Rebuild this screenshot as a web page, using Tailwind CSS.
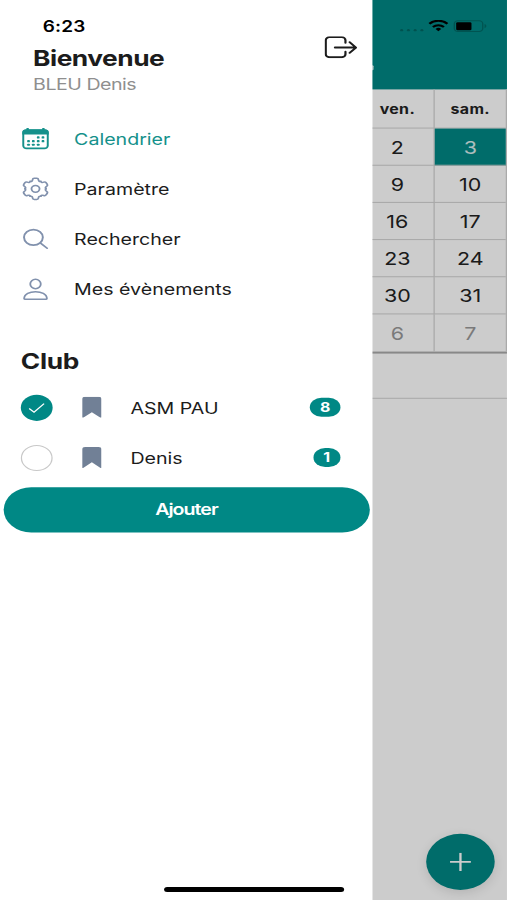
<!DOCTYPE html>
<html lang="fr">
<head>
    <meta charset="UTF-8" />
    <meta name="viewport" content="width=device-width, initial-scale=1.0" />
    <title>Calendrier - Menu</title>
    <script src="https://cdn.jsdelivr.net/npm/@tailwindcss/browser@4"></script>
</head>
<body class="w-[507px] h-[900px] overflow-hidden bg-white">
    <!-- 414x896 phone screen stretched to the window -->
    <div class="relative flex w-[414px] h-[896px] origin-top-left scale-x-[1.2246] scale-y-[1.0045] overflow-hidden font-[Inter,sans-serif] text-base text-[#1c1c1c]">

        <!-- Side menu -->
        <aside class="w-[304px] shrink-0 bg-white">
            <div class="h-[39px] pt-[15px] pl-[35px] text-[15.5px] leading-6 font-semibold tracking-[0.1px] text-black">6:23</div>

            <header class="flex justify-between h-[73.5px] pl-[27px] pr-[12px]">
                <div class="pt-[5px]">
                    <h1 class="text-[21.5px] leading-7 font-bold tracking-[-0.4px]">Bienvenue</h1>
                    <p class="text-[16px] leading-6 tracking-[-0.4px] text-[#8f8f8f]">BLEU Denis</p>
                </div>
                <svg class="w-[27px] h-[22px] -mt-[3px]" viewBox="0 0 27 22" fill="none" stroke="#1c1c1c" stroke-width="1.8" stroke-linecap="round" stroke-linejoin="round">
                    <path d="M17.1 6.6V4a3 3 0 0 0-3-3H4a3 3 0 0 0-3 3v14a3 3 0 0 0 3 3h10.100a3 3 0 0 0 3-3v-2.600" />
                    <path d="M8.500 11.300H25.500M20.500 6l5.200 5.300-5.200 5.300" />
                </svg>
            </header>

            <nav class="text-[16px]">
                <a class="flex items-center gap-5 h-[50px] pl-[16.5px] text-[#15918b]">
                    <svg class="w-6 h-6" viewBox="0 0 24 24" fill="none">
                        <rect x="2" y="3.400" width="20" height="18.300" rx="2.700" stroke="#15918b" stroke-width="1.600" />
                        <path d="M1.200 8V5.500a2.700 2.700 0 0 1 2.700-2.700h.7V1.500h1.900v1.300h11V1.500h1.900v1.300h.7a2.700 2.700 0 0 1 2.700 2.700V8z" fill="#15918b" />
                        <g fill="#15918b">
                            <rect x="13.100" y="9.700" width="2.200" height="2.200" rx=".6" /><rect x="17" y="9.700" width="2.200" height="2.200" rx=".6" />
                            <rect x="5.200" y="13.400" width="2.200" height="2.200" rx=".6" /><rect x="9.100" y="13.400" width="2.200" height="2.200" rx=".6" /><rect x="13.100" y="13.400" width="2.200" height="2.200" rx=".6" /><rect x="17" y="13.400" width="2.200" height="2.200" rx=".6" />
                            <rect x="5.200" y="17" width="2.200" height="2.200" rx=".6" /><rect x="9.100" y="17" width="2.200" height="2.200" rx=".6" /><rect x="13.100" y="17" width="2.200" height="2.200" rx=".6" />
                        </g>
                    </svg>
                    <span>Calendrier</span>
                </a>
                <a class="flex items-center gap-5 h-[50px] pl-[16.5px]">
                    <svg class="w-6 h-6" viewBox="0 0 24 24" fill="none" stroke="#8191ad" stroke-width="1.500" stroke-linecap="round" stroke-linejoin="round">
                        <circle cx="12" cy="12" r="3.300" />
                        <path id="tooth" d="M7.700 4.560C8.900 5 9.500 4 9.600 2.900Q9.700 1.500 11 1.500H13Q14.300 1.500 14.400 2.900C14.500 4 15.100 5 16.300 4.560" />
                        <use href="#tooth" transform="rotate(60 12 12)" />
                        <use href="#tooth" transform="rotate(120 12 12)" />
                        <use href="#tooth" transform="rotate(180 12 12)" />
                        <use href="#tooth" transform="rotate(240 12 12)" />
                        <use href="#tooth" transform="rotate(300 12 12)" />
                    </svg>
                    <span>Paramètre</span>
                </a>
                <a class="flex items-center gap-5 h-[50px] pl-[16.5px]">
                    <svg class="w-6 h-6" viewBox="0 0 24 24" fill="none" stroke="#8191ad" stroke-width="1.600" stroke-linecap="round">
                        <circle cx="10.300" cy="10.300" r="7.700" />
                        <path d="M16.100 16l5.400 5.100" />
                    </svg>
                    <span>Rechercher</span>
                </a>
                <a class="flex items-center gap-5 h-[50px] pl-[16.5px]">
                    <svg class="w-6 h-6" viewBox="0 0 24 24" fill="none" stroke="#8191ad" stroke-width="1.500" stroke-linejoin="round">
                        <ellipse cx="12" cy="6.700" rx="4.300" ry="4.700" />
                        <path d="M2.700 21.500C2.700 16.500 7.500 14.500 12 14.500s9.300 2 9.300 7q0 .3-.5.300H3.200q-.5 0-.5-.3z" />
                    </svg>
                    <span>Mes évènements</span>
                </a>
            </nav>

            <h2 class="h-[68px] pt-[32px] pl-[17px] text-[21.500px] leading-7 font-bold tracking-[-0.3px]">Club</h2>

            <ul>
                <li class="flex items-center h-[50px] pl-[17px] pr-[26px]">
                    <span class="flex items-center justify-center size-[26px] rounded-full bg-[#008885]">
                        <svg class="w-[14px] h-[12px]" viewBox="0 0 14 12" fill="none" stroke="#fff" stroke-width="1.100"><path d="M.8 6.700l4 3.600L13 1.900" /></svg>
                    </span>
                    <svg class="w-4 h-[21px] ml-[23.500px]" viewBox="0 0 16 21" fill="#718096"><path d="M2.500 0h11Q15.800 0 15.800 2.300V20.500q0 .8-.7.300L8 15.300.9 20.800q-.7.500-.7-.3V2.300Q.2 0 2.500 0z" /></svg>
                    <span class="ml-[24px] grow">ASM PAU</span>
                    <span class="flex items-center justify-center w-[25px] h-[19px] rounded-full bg-[#008885] pt-px text-[13px] font-bold text-white">8</span>
                </li>
                <li class="flex items-center h-[50px] pl-[17px] pr-[26px]">
                    <span class="size-[26px] rounded-full border border-[#c8c8c8]"></span>
                    <svg class="w-4 h-[21px] ml-[23.500px]" viewBox="0 0 16 21" fill="#718096"><path d="M2.500 0h11Q15.800 0 15.800 2.300V20.500q0 .8-.7.300L8 15.300.9 20.800q-.7.500-.7-.3V2.300Q.2 0 2.500 0z" /></svg>
                    <span class="ml-[24px] grow">Denis</span>
                    <span class="flex items-center justify-center w-[22.500px] h-[19px] rounded-full bg-[#008885] pt-px text-[13px] font-bold text-white">1</span>
                </li>
            </ul>

            <button class="block w-[299.500px] h-[45px] mt-[4px] ml-[2.500px] rounded-full bg-[#008885] text-[16px] font-semibold tracking-[-0.8px] text-white">Ajouter</button>
        </aside>

        <!-- Calendar behind the menu -->
        <main class="relative w-[110px] overflow-hidden bg-white">
            <div class="h-[89px] bg-[#008885]">
                <div class="absolute top-[65px] -left-px w-[2px] h-[5px] rounded-full bg-white"></div>
            </div>
            <div class="flex justify-end h-[263px] border-b-2 border-[#aaa]">
                <div class="grid shrink-0 grid-cols-[60px_58px] grid-rows-[39px_repeat(6,37px)] border-r border-[#d2d2d2] text-[17.500px] text-center text-[#222] *:flex *:items-center *:justify-center *:pt-[2px] *:border-[#d2d2d2]">
                    <div class="border-r border-b text-[13px] font-bold tracking-[0.3px]">ven.</div><div class="border-b text-[13px] font-bold tracking-[0.3px]">sam.</div>
                    <div class="border-r border-b">2</div><div class="border-b bg-[#008885] text-white/85">3</div>
                    <div class="border-r border-b">9</div><div class="border-b">10</div>
                    <div class="border-r border-b">16</div><div class="border-b">17</div>
                    <div class="border-r border-b">23</div><div class="border-b">24</div>
                    <div class="border-r border-b">30</div><div class="border-b">31</div>
                    <div class="border-r text-[#999]">6</div><div class="text-[#999]">7</div>
                </div>
            </div>
            <div class="h-[45px] border-b border-[#d2d2d2]"></div>

            <button class="absolute right-[10px] bottom-[10px] flex items-center justify-center size-[56px] rounded-full bg-[#008885] shadow-[0_3px_10px_rgba(0,0,0,0.12)]">
                <svg class="w-[18px] h-[18px]" viewBox="0 0 18 18" stroke="#fff" stroke-width="1.900"><path d="M9 0v18M.5 9h17" /></svg>
            </button>
            <div class="absolute inset-0 bg-black/20"></div>

            <!-- Status icons -->
            <div class="absolute top-[20px] left-[22px]">
                <svg class="w-[72px] h-[13px]" viewBox="0 0 72 13" fill="none">
                    <g fill="#00524f"><circle cx="2" cy="10" r="1.200" /><circle cx="7.500" cy="10" r="1.200" /><circle cx="13" cy="10" r="1.200" /><circle cx="18.500" cy="10" r="1.200" /></g>
                    <g stroke="#000" stroke-width="2"><path d="M24.600 3.700a10.500 10.500 0 0 1 14.800 0" /><path d="M27.500 6.800a6.600 6.600 0 0 1 9 0" /></g>
                    <path d="M32 11.200l-2.300-2.400a3.400 3.400 0 0 1 4.600 0z" fill="#000" />
                    <rect x="45" y=".7" width="23.200" height="10.600" rx="3" stroke="#005451" stroke-width="1.100" />
                    <path d="M69.700 4v4q1.500-.7 1.500-2t-1.500-2z" fill="#005451" />
                    <rect x="46.500" y="2.200" width="12.500" height="7.800" rx="1.200" fill="#000" />
                </svg>
            </div>
        </main>

        <!-- Home indicator -->
        <div class="absolute bottom-[8px] left-[133.500px] w-[147px] h-[5px] rounded-full bg-black"></div>
    </div>
</body>
</html>
